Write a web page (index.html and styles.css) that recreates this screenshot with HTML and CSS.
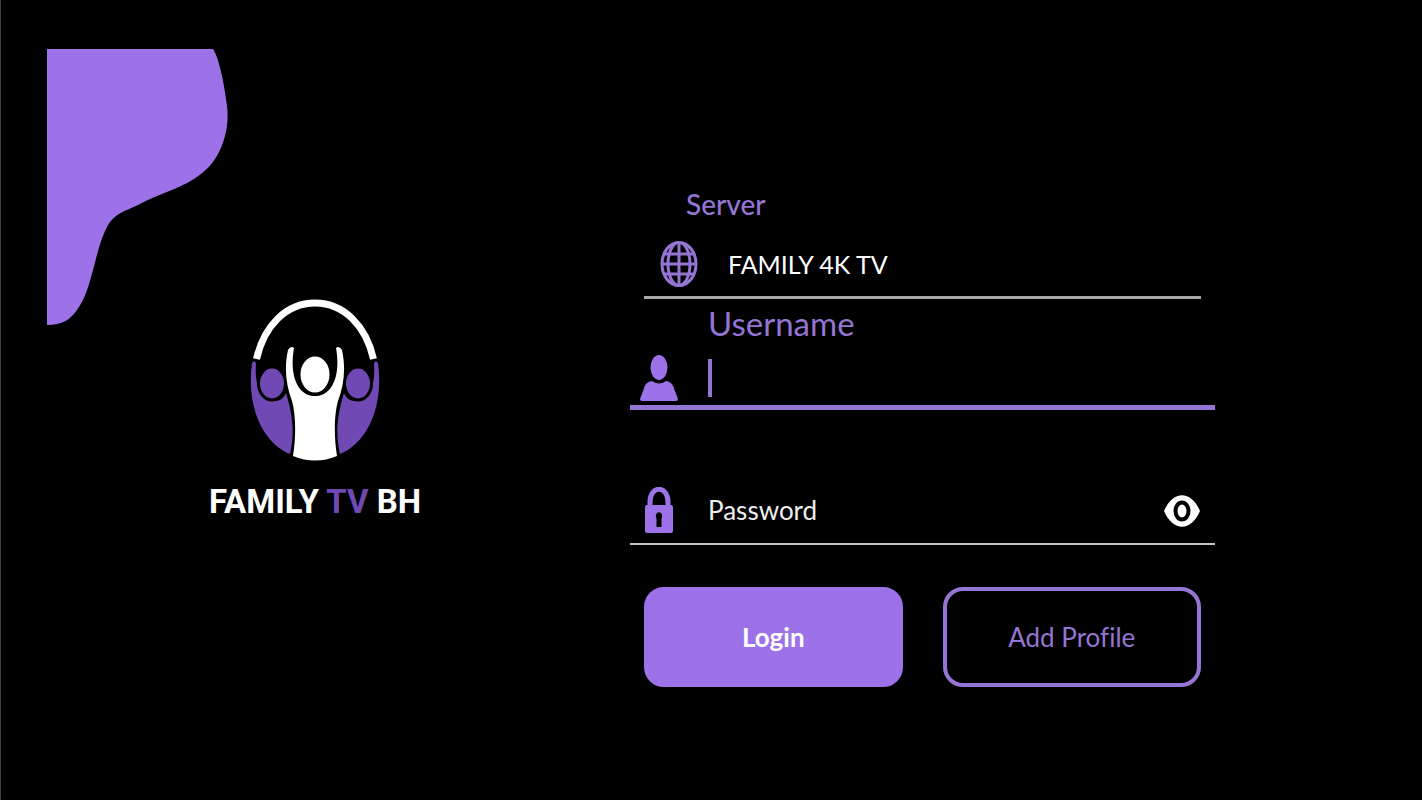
FILE: index.html
```html
<!DOCTYPE html>
<html lang="en">

<head>
  <meta charset="utf-8">
  <title>Family TV BH</title>
  <link rel="stylesheet" href="styles.css">
</head>

<body>
  <main class="page">
    <section class="brand">
      <svg class="blob" viewBox="0 0 181 276" aria-hidden="true">
        <path d="M0 0H166C172 9 177 33 180 57C183 80 175 110 154 125C137 139 113 144 91 156C79 162 68 164 61 176C48 199 46 237 32 258C24 271 15 276 0 276Z" />
      </svg>
      <div class="logo">
        <svg class="logo-mark" viewBox="0 0 130 162" aria-hidden="true">
          <path class="arch" d="M6.500 60C14 27 36 4 65 4C94 4 116 27 123.500 60" />
          <g id="side">
            <path class="side" d="M2 64Q5 60 6 65C4 91 14 103 25 102C30 102 34 99 36 94C44 120 44 137 40 155C13 144-4 108 2 64Z" />
            <ellipse class="side head" cx="22" cy="84.500" rx="12" ry="15" />
          </g>
          <use href="#side" transform="matrix(-1 0 0 1 130 0)" />
          <path class="center" d="M38 51Q41 46 44 49C39 77 48 97 65 97C82 97 91 77 86 49Q89 46 92 51C96 69 94 86 88 102C84 116 84 139 87 157Q65 166 43 157C46 139 46 116 42 102C36 86 34 69 38 51Z" />
          <ellipse class="center head" cx="65" cy="75.500" rx="14.500" ry="18" />
        </svg>
        <h1 class="logo-text">FAMILY <span>TV</span> BH</h1>
      </div>
    </section>

    <form class="login">
      <label class="server-label" for="server">Server</label>
      <div class="field server-field">
        <svg class="icon globe" viewBox="0 0 38 46" aria-hidden="true">
          <ellipse cx="19" cy="23" rx="17" ry="21.500" />
          <ellipse cx="19" cy="23" rx="11" ry="21.500" />
          <path d="M19 2V44M4 13H34M2 23H36M4 33H34" />
        </svg>
        <input type="text" id="server" name="server" value="FAMILY 4K TV">
      </div>

      <label class="username-label" for="username">Username</label>
      <div class="field username-field">
        <svg class="icon" viewBox="0 0 38 46" aria-hidden="true">
          <ellipse cx="19" cy="12.500" rx="8.500" ry="12.500" />
          <path d="M12 26Q19 31 26 26C32 27 33 30 35 36L38 44Q38 46 36 46H2Q0 46 0 44L3 36C5 30 6 27 12 26Z" />
        </svg>
        <span class="caret"></span>
        <input type="text" id="username" name="username">
      </div>

      <div class="field password-field">
        <svg class="icon" viewBox="0 0 38 46" aria-hidden="true">
          <path class="shackle" d="M10 21V15C10-2 28-2 28 15V21" />
          <path fill-rule="evenodd" d="M7 18H31Q33 18 33 20V44Q33 46 31 46H7Q5 46 5 44V20Q5 18 7 18ZM16.500 32V40H21.500V32C25 23 13 23 16.500 32Z" />
        </svg>
        <input type="password" id="password" name="password" placeholder="Password" aria-label="Password">
        <button class="eye" type="button" aria-label="Show password">
          <svg viewBox="0 0 38 32" aria-hidden="true">
            <path d="M1 16C10-5 28-5 37 16C28 37 10 37 1 16Z" />
            <ellipse cx="19" cy="16" rx="6.500" ry="8.500" />
          </svg>
        </button>
      </div>

      <div class="actions">
        <button class="btn btn-login" type="submit">Login</button>
        <button class="btn btn-profile" type="button">Add Profile</button>
      </div>
    </form>
  </main>
</body>

</html>
```
FILE: styles.css
```css
* {
  box-sizing: border-box;
}

body {
  margin: 0;
  background-color: #000;
  color: #fff;
  font-family: Lato, sans-serif;
  font-size: 26px;
  font-variant-ligatures: none;
}

.page {
  display: grid;
  grid-template-columns: 630fr 585fr 207fr;
  min-height: 100vh;
  box-shadow: inset 1px 0 #444;
}

/* shape and logo share one cell */
.brand {
  display: grid;
  align-items: start;
}

.blob,
.logo {
  grid-area: 1 / 1;
}

.blob {
  width: 181px;
  margin: 49px 0 0 47px;
  fill: #9d71e8;
}

.logo {
  display: flex;
  flex-direction: column;
  align-items: center;
  margin-top: 299px;
}

.logo-mark {
  width: 130px;
}

.arch {
  fill: none;
  stroke: #fff;
  stroke-width: 7px;
}

.side {
  fill: #7049b4;
}

.center {
  fill: #fff;
}

.head {
  stroke: #000;
  stroke-width: 6px;
  paint-order: stroke;
}

.logo-text {
  margin: 21px 0 0;
  font-family: Roboto, sans-serif;
  font-size: 33px;
  font-weight: 700;
  line-height: 40px;
}

.logo-text span {
  color: #7049b4;
}

.login {
  display: flex;
  flex-direction: column;
  padding-top: 188px;
}

.server-label {
  margin-left: 56px;
  color: #9575d4;
  font-size: 28px;
  font-weight: 500;
  line-height: 32px;
}

.field {
  display: flex;
  align-items: center;
}

.field input {
  flex: 1;
  min-width: 0;
  height: 44px;
  padding: 0;
  border: none;
  outline: none;
  background: none;
  color: #fff;
  font: inherit;
}

.icon {
  width: 38px;
  height: 46px;
  fill: #9d71e8;
}

.server-field {
  gap: 30px;
  height: 68px;
  margin: 11px 14px 0;
  padding-left: 16px;
  border-bottom: 3px solid #a8a8a8;
  font-size: 25px;
}

.globe {
  fill: none;
  stroke: #9575d4;
  stroke-width: 3px;
}

.username-label {
  margin: 4px 0 0 78px;
  color: #9575d4;
  font-size: 33px;
  line-height: 40px;
}

.username-field {
  gap: 30px;
  height: 60px;
  margin-top: 7px;
  padding-left: 10px;
  border-bottom: 5px solid #9575d4;
}

.username-field input {
  caret-color: transparent;
}

.caret {
  width: 4px;
  height: 38px;
  background-color: #9575d4;
}

.password-field {
  gap: 30px;
  height: 68px;
  margin-top: 67px;
  padding: 0 14px 0 10px;
  border-bottom: 2px solid #c4c4c4;
}

.field input::placeholder {
  color: #eee;
  opacity: 1;
}

.eye {
  display: flex;
  padding: 2px 0 0;
  border: none;
  background: none;
  cursor: pointer;
}

.eye svg {
  width: 38px;
  height: 32px;
  fill: #fff;
}

.eye ellipse {
  stroke: #000;
  stroke-width: 4px;
}

.shackle {
  fill: none;
  stroke: #9d71e8;
  stroke-width: 5px;
}

.actions {
  display: grid;
  grid-template-columns: 1fr 1fr;
  gap: 40px;
  margin: 42px 14px 0;
}

.btn {
  height: 100px;
  border: 4px solid #9d71e8;
  border-radius: 20px;
  font: inherit;
  font-variant-ligatures: none;
  cursor: pointer;
}

.btn-login {
  background-color: #9d71e8;
  color: #fff;
  font-weight: 700;
}

.btn-profile {
  border-color: #9575d4;
  background: none;
  color: #9575d4;
}
```
